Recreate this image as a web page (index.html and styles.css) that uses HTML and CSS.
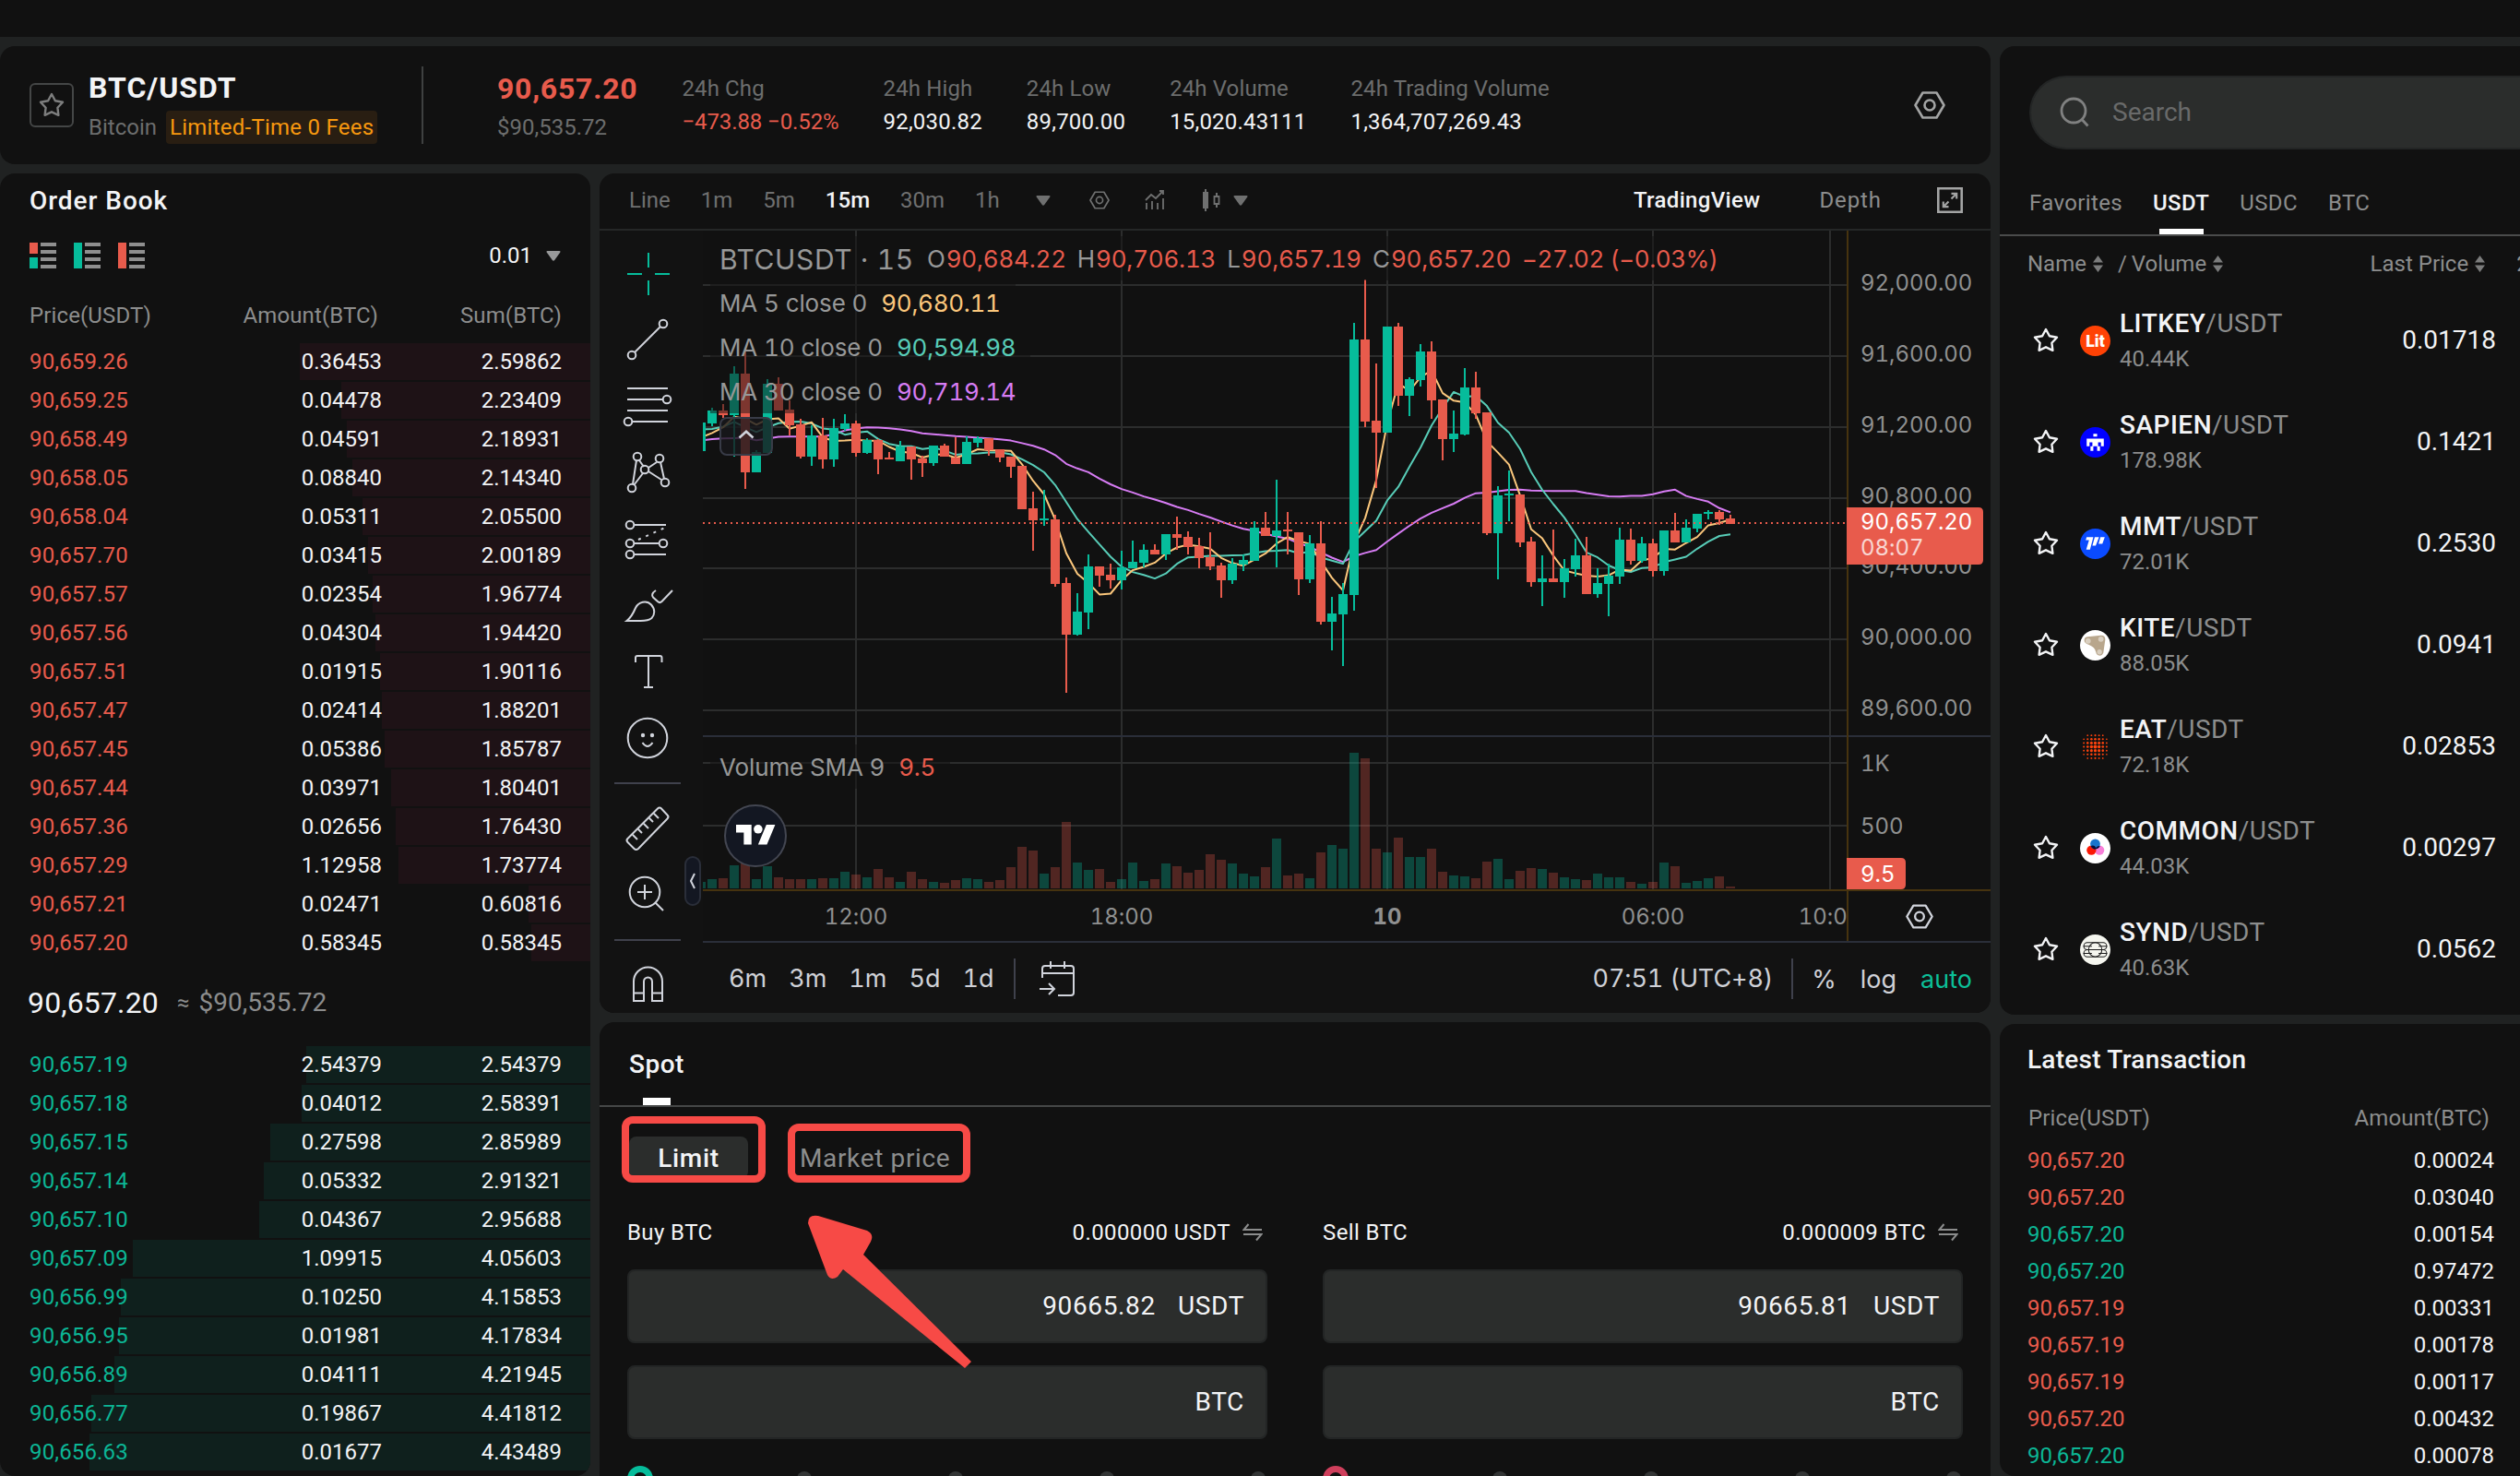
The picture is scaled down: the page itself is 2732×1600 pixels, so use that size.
FILE: index.html
```html
<!DOCTYPE html>
<html lang="en">
<head>
  <meta charset="UTF-8"/>
  <meta name="viewport" content="width=device-width, initial-scale=1.0"/>
  <title>BTC/USDT Spot Trading</title>
  <link rel="stylesheet" href="styles.css">
</head>
<body>
  <svg class="defs" aria-hidden="true">
    <symbol id="star" viewBox="0 0 28 28">
      <path d="M14 2l3.900 7.200 8.100 1.500-5.600 6 1 8.100-7.400-3.500-7.400 3.500 1-8.100-5.600-6 8.100-1.500z" fill="none" stroke="currentColor" stroke-width="2.400" stroke-linejoin="round"/>
    </symbol>
    <symbol id="hex" viewBox="0 0 34 30">
      <path d="M9.500 1.500h15L32.500 15l-8 13.500h-15L1.500 15z" fill="none" stroke="currentColor" stroke-width="2.600" stroke-linejoin="round"/>
      <circle cx="17" cy="15" r="5.500" fill="none" stroke="currentColor" stroke-width="2.600"/>
    </symbol>
    <symbol id="caret" viewBox="0 0 16 11"><path d="M1.500 0h13q1.500 0 .8 1.600L9.200 10q-1.200 1.300-2.400 0L.7 1.600Q0 0 1.500 0z" fill="currentColor"/></symbol>
    <symbol id="sort" viewBox="0 0 11 18"><path d="M5.500 0L11 7.500H0zM5.500 18L11 10.500H0z" fill="currentColor"/></symbol>
    <symbol id="swap" viewBox="0 0 22 20"><path d="M6.500 1L1.500 7H21M1 12h19.500L15 18.500" fill="none" stroke="currentColor" stroke-width="2"/></symbol>
  </svg>

  <header class="topbar"></header>

  <main class="layout">
    <div class="trade">
      <!-- Ticker -->
      <section class="panel ticker">
        <button class="fav-btn"><svg width="28" height="28"><use href="#star"/></svg></button>
        <div class="pair">
          <h1 class="pair-name">BTC/USDT</h1>
          <div class="pair-sub"><span>Bitcoin</span><span class="badge">Limited-Time 0 Fees</span></div>
        </div>
        <div class="stats">
          <div class="stat stat-price">
            <strong class="down">90,657.20</strong>
            <span>$90,535.72</span>
          </div>
          <div class="stat"><span>24h Chg</span><b class="down">−473.88 −0.52%</b></div>
          <div class="stat"><span>24h High</span><b>92,030.82</b></div>
          <div class="stat"><span>24h Low</span><b>89,700.00</b></div>
          <div class="stat"><span>24h Volume</span><b>15,020.43111</b></div>
          <div class="stat"><span>24h Trading Volume</span><b>1,364,707,269.43</b></div>
        </div>
        <svg class="ticker-settings" width="34" height="30"><use href="#hex"/></svg>
      </section>

      <div class="columns">
        <!-- Order book -->
        <section class="panel book">
          <h2 class="panel-title">Order Book</h2>
          <div class="book-tools">
            <svg width="29" height="28"><path fill="#e85b4c" d="M0 0h9v12H0z"/><path fill="#06bc9b" d="M0 16h9v12H0z"/><path fill="#8f8f8f" d="M12 0h17v4H12zM12 8h17v4H12zM12 16h17v4H12zM12 24h17v4H12z"/></svg>
            <svg width="29" height="28"><path fill="#06bc9b" d="M0 0h9v28H0z"/><path fill="#8f8f8f" d="M12 0h17v4H12zM12 8h17v4H12zM12 16h17v4H12zM12 24h17v4H12z"/></svg>
            <svg width="29" height="28"><path fill="#e85b4c" d="M0 0h9v28H0z"/><path fill="#8f8f8f" d="M12 0h17v4H12zM12 8h17v4H12zM12 16h17v4H12zM12 24h17v4H12z"/></svg>
            <div class="book-step">0.01 <svg width="16" height="11"><use href="#caret"/></svg></div>
          </div>
          <div class="book-head"><span>Price(USDT)</span><span>Amount(BTC)</span><span>Sum(BTC)</span></div>
          <div class="book-rows asks" id="asks"></div>
          <div class="book-last"><b>90,657.20</b><span>≈</span><em>$90,535.72</em></div>
          <div class="book-rows bids" id="bids"></div>
        </section>

        <div class="center">
          <!-- Chart -->
          <section class="panel chart">
            <div class="chart-bar">
              <div class="intervals">
                <span>Line</span><span>1m</span><span>5m</span><span class="active">15m</span><span>30m</span><span>1h</span>
              </div>
              <div class="chart-icons">
                <svg class="ic-caret" width="16" height="11"><use href="#caret"/></svg>
                <svg class="ic-hex" width="22" height="20"><use href="#hex"/></svg>
                <svg class="ic-ind" width="22" height="22" fill="none" stroke="currentColor" stroke-width="1.800"><path d="M1 11l6-6 5 4 8-8M16 1h4v4M2 14v7M8 12v9M14 14v7M20 9v12"/></svg>
                <svg class="ic-candle" width="20" height="24"><path fill="currentColor" d="M1 3h6v18H1zM3 0h2v24H3zM15 4h2v16h-2z"/><path d="M13.500 8h5v8h-5z" fill="#111" stroke="currentColor" stroke-width="1.800"/></svg>
                <svg width="16" height="11"><use href="#caret"/></svg>
              </div>
              <div class="views">
                <span class="active">TradingView</span>
                <span class="depth">Depth</span>
                <svg width="28" height="28" fill="none" stroke="currentColor" stroke-width="2.600"><path d="M1.300 1.300h25.400v25.400H1.300z"/><path d="M15.500 12.500L21 7M15.500 6.800H21.200V12.500M12.500 15.500L7 21M6.800 15.500V21.200H12.500" stroke-width="2.200"/></svg>
              </div>
            </div>
            <div class="chart-body">
              <div class="tools">
                <svg class="tool tool-on" viewBox="0 0 72 72"><path d="M14 37h16M44 37h16M37 14v16M37 44v16"/></svg>
                <svg class="tool" viewBox="0 0 72 72"><path d="M22 50L50 22"/><circle cx="53" cy="19" r="4.300"/><circle cx="19" cy="53" r="4.300"/></svg>
                <svg class="tool" viewBox="0 0 72 72"><path d="M14 17h44M14 29h39M14 41h44M19 53h39"/><circle cx="57" cy="29" r="4.300"/><circle cx="15" cy="53" r="4.300"/></svg>
                <svg class="tool" viewBox="0 0 72 72"><path d="M24 23l-4 26M21.500 49.500L31 37M27 23l5 7M37 31l9-6M37 35l14 9M50 25l4 18"/><circle cx="25" cy="19" r="4.300"/><circle cx="49" cy="21" r="4.300"/><circle cx="33" cy="33" r="4.300"/><circle cx="19" cy="53" r="4.300"/><circle cx="55" cy="47" r="4.300"/></svg>
                <svg class="tool" viewBox="0 0 72 72"><path d="M21 21h35M21 41h28M21 53h35"/><path d="M26 37l29-13" stroke-dasharray="3 6"/><circle cx="17" cy="21" r="4.300"/><circle cx="17" cy="41" r="4.300"/><circle cx="53" cy="41" r="4.300"/><circle cx="17" cy="53" r="4.300"/></svg>
                <svg class="tool" viewBox="0 0 72 72"><path d="M13.500 53c5-4 7-8 9.500-14 3-6.500 12-9 17-3.500 4.500 5 4 11 .5 14.500-3.500 3-7 3-12 3z"/><path d="M63 20L51.500 32c-1.500 1.500-3 1.500-4.500 0l-5-4.500c-1.500-2-1.500-4.500 3-7.500"/></svg>
                <svg class="tool" viewBox="0 0 72 72"><path d="M23 26v-5q0-2 2-2h24.500q2 0 2 2v5M37 19v34M32 53h10"/></svg>
                <svg class="tool" viewBox="0 0 72 72"><circle cx="36" cy="36" r="21.300"/><path d="M30.500 41q5.500 8 11 0"/><circle class="dot" cx="31" cy="33" r="2.200"/><circle class="dot" cx="41" cy="33" r="2.200"/></svg>
                <hr class="tool-sep">
                <svg class="tool" viewBox="0 0 72 72"><path d="M47 14.500q2-2 4 0l6.500 7q2 2 0 4L26 58q-2.500 2-4.500 0l-7-7q-2-2 0-4zM20 43l5 5M26 37l4 4M32 31l5 5M38 25l4 4M43 20l5 5"/></svg>
                <svg class="tool" viewBox="0 0 72 72"><circle cx="33" cy="33" r="16.300"/><path d="M25 33h16M33 25v16M44.500 44.500L53 53"/></svg>
                <hr class="tool-sep">
                <svg class="tool" viewBox="0 0 72 72"><path d="M21 53V32a15.500 15.500 0 0 1 31 0v21H41V32a4.500 4.500 0 0 0-9 0v21zM21 44.500h11M41 44.500h11"/></svg>
              </div>
              <button class="tools-toggle"><svg width="8" height="18" fill="none" stroke="#d1d4dc" stroke-width="2"><path d="M6 1L2 9l4 8"/></svg></button>

              <div class="chart-main">
                <svg class="plot" id="plot" width="1396" height="772" viewBox="0 0 1396 772"></svg>
                <div class="legend">
                  <div class="legend-row legend-main">
                    <span class="legend-sym">BTCUSDT · 15</span>
                    <span class="ohlc">O<i>90,684.22</i></span>
                    <span class="ohlc">H<i>90,706.13</i></span>
                    <span class="ohlc">L<i>90,657.19</i></span>
                    <span class="ohlc">C<i>90,657.20</i></span>
                    <span class="ohlc"><i class="diff">−27.02 (−0.03%)</i></span>
                  </div>
                  <div class="legend-row">MA 5 close 0 <i class="ma5">90,680.11</i></div>
                  <div class="legend-row">MA 10 close 0 <i class="ma10">90,594.98</i></div>
                  <div class="legend-row">MA 30 close 0 <i class="ma30">90,719.14</i></div>
                  <button class="legend-toggle"><svg width="18" height="10" fill="none" stroke="#d1d4dc" stroke-width="2.600"><path d="M1.500 8.500L9 1.800l7.500 6.700"/></svg></button>
                </div>
                <div class="legend legend-vol">
                  <div class="legend-row">Volume SMA 9 <i class="down">9.5</i></div>
                </div>
                <div class="tv-logo"><svg width="43" height="34" viewBox="0 0 36 28" fill="#fff"><path d="M14 22H7V11H0V4h14v18zM28 22h-8l7.500-18h8L28 22z"/><circle cx="20" cy="8" r="4"/></svg></div>

                <div class="range-bar">
                  <div class="ranges"><span>6m</span><span>3m</span><span>1m</span><span>5d</span><span>1d</span></div>
                  <svg class="goto" width="40" height="40" fill="none" stroke="#d1d4dc" stroke-width="2"><path d="M4 19V9q0-3 3-3h28q3 0 3 3v26q0 3-3 3H21M4 14h34M13 1v8M28 1v8M1 31h15M11 25l6 6-6 6"/></svg>
                  <div class="clock">07:51 (UTC+8)</div>
                  <div class="scales"><span>%</span><span>log</span><span class="on">auto</span></div>
                </div>
              </div>
            </div>
          </section>

          <!-- Order form -->
          <section class="panel spot">
            <div class="spot-head"><span>Spot</span></div>
            <div class="order-types">
              <span class="type active">Limit</span>
              <span class="type">Market price</span>
              <div class="mark mark-limit"></div>
              <div class="mark mark-market"></div>
              <svg class="mark-arrow" width="180" height="168" viewBox="0 0 180 168"><path fill="#f74a46" d="M13 2L66 18q8 4 4 12l-8 14 117 116-7 7L40 60l-6 8q-7 5-11-2L2 10Q2 0 13 2z"/></svg>
            </div>
            <div class="forms">
              <div class="form buy">
                <div class="form-head"><span>Buy BTC</span><span class="avail">0.000000 USDT <svg width="22" height="20"><use href="#swap"/></svg></span></div>
                <div class="field"><b>90665.82</b><span>USDT</span></div>
                <div class="field"><span>BTC</span></div>
                <div class="slider"><i class="knob"></i><i></i><i></i><i></i><i></i></div>
              </div>
              <div class="form sell">
                <div class="form-head"><span>Sell BTC</span><span class="avail">0.000009 BTC <svg width="22" height="20"><use href="#swap"/></svg></span></div>
                <div class="field"><b>90665.81</b><span>USDT</span></div>
                <div class="field"><span>BTC</span></div>
                <div class="slider"><i class="knob"></i><i></i><i></i><i></i><i></i></div>
              </div>
            </div>
          </section>
        </div>
      </div>
    </div>

    <aside class="side">
      <!-- Markets -->
      <section class="panel markets">
        <div class="search">
          <svg width="32" height="34" fill="none" stroke="#808181" stroke-width="2.800"><circle cx="15" cy="15" r="13"/><path d="M24 24.500l6.500 7"/></svg>
          <span>Search</span>
        </div>
        <div class="market-tabs">
          <span>Favorites</span><span class="active">USDT</span><span>USDC</span><span>BTC</span>
        </div>
        <div class="market-head">
          <span>Name</span><svg width="11" height="18"><use href="#sort"/></svg>
          <span class="slash">/</span><span>Volume</span><svg width="11" height="18"><use href="#sort"/></svg>
          <span class="last">Last Price</span><svg width="11" height="18"><use href="#sort"/></svg>
          <span class="chg">24h Chg</span>
        </div>
        <div id="markets"></div>
      </section>

      <!-- Trades -->
      <section class="panel trades">
        <h2 class="panel-title">Latest Transaction</h2>
        <div class="trade-row trade-head"><span>Price(USDT)</span><span>Amount(BTC)</span></div>
        <div id="trades"></div>
      </section>
    </aside>
  </main>

  <script src="script.js"></script>
</body>
</html>
```
FILE: styles.css
```css
/* Reset & Base */
*, *::before, *::after { margin:0; padding:0; box-sizing:border-box; }
body {
  font-family: Roboto, "Noto Sans", sans-serif;
  font-size: 24px;
  line-height: 1;
  background: #202222;
  color: #f3f4f6;
  width: 2732px;
  height: 1600px;
  overflow: hidden;
}
svg { display: block; flex: none; }
b, i, em { font-weight: inherit; font-style: normal; }
button { background: none; border: none; color: inherit; font: inherit; }
.defs { position: absolute; width: 0; height: 0; }
.down { color: #e85b4c; }
.panel { background: #111; border-radius: 16px; overflow: hidden; }
.panel-title { font-size: 28px; font-weight: 500; letter-spacing: 0.95px; }

/* Layout */
.topbar { height: 40px; background: #111; }
.layout { display: flex; gap: 10px; padding-top: 10px; height: 1560px; }
.trade { width: 2158px; flex: none; display: flex; flex-direction: column; gap: 10px; }
.columns { flex: 1; display: flex; gap: 10px; min-height: 0; }
.center { flex: 1; display: flex; flex-direction: column; gap: 10px; min-height: 0; }
.side { flex: 1; min-width: 0; display: flex; flex-direction: column; gap: 10px; }
.side .panel { border-radius: 16px 0 0 16px; }

/* Ticker */
.ticker {
  height: 128px;
  flex: none;
  display: flex;
  align-items: center;
  padding: 0 49px 0 32px;
}
.fav-btn {
  width: 48px;
  height: 48px;
  border: 2px solid #444646;
  border-radius: 6px;
  color: #7d7e7e;
  display: flex;
  align-items: center;
  justify-content: center;
}
.pair {
  width: 363px;
  height: 84px;
  margin-left: 16px;
  border-right: 2px solid #3f4141;
}
.pair-name { font-size: 32px; line-height: 47px; font-weight: 700; letter-spacing: 1px; }
.pair-sub { display: flex; align-items: center; gap: 10px; height: 36px; margin-top: 1px; color: #6c6d6d; }
.badge {
  height: 36px;
  padding: 0 4px;
  line-height: 36px;
  background: #291e12;
  border-radius: 4px;
  color: #f7980f;
  letter-spacing: 0.25px;
}
.stats { display: flex; gap: 48px; margin-left: 80px; height: 84px; }
.stat { color: #6c6d6d; line-height: 36px; padding-top: 6px; letter-spacing: 0.12px; }
.stat span, .stat b, .stat strong { display: block; white-space: nowrap; }
.stat b { color: #f3f4f6; letter-spacing: 0.2px; }
.stat b.down { color: #e85b4c; letter-spacing: -0.1px; }
.stat strong { font-size: 32px; font-weight: 700; line-height: 48px; letter-spacing: 0.75px; }
.stat-price { padding-top: 0; letter-spacing: 0; }
.ticker-settings { margin-left: auto; color: #a3a4a4; }

/* Order book */
.book { width: 640px; flex: none; }
.book .panel-title { padding: 14px 32px 0; line-height: 31px; }
.book-tools { display: flex; align-items: center; gap: 19px; height: 30px; margin-top: 29px; padding: 0 32px; }
.book-step { margin-left: auto; display: flex; align-items: center; gap: 15px; }
.book-step svg { color: #98999a; }
.book-head, .book-row {
  display: grid;
  grid-template-columns: 182px 200px 195px;
  padding-left: 32px;
}
.book-head span + span, .book-row span + span { text-align: right; }
.book-head { margin-top: 23px; height: 54px; line-height: 55px; color: #8c8d8d; letter-spacing: 0.12px; }
.book-head span:nth-child(2) { padding-right: 4px; }
.book-rows { display: grid; gap: 2px; }
.asks { margin-top: 3px; }
.book-row {
  height: 40px;
  line-height: 41px;
  background-repeat: no-repeat;
  background-position: right top;
}
.asks .book-row { background-image: linear-gradient(#1e1216, #1e1216); }
.bids .book-row { background-image: linear-gradient(#0f201d, #0f201d); }
.book-row span:first-child { letter-spacing: 0.15px; }
.asks span:first-child { color: #e85b4c; }
.bids span:first-child { color: #0cb695; }
.book-last { display: flex; align-items: center; height: 92px; padding: 0 0 2px 30px; font-size: 28px; color: #8c8d8d; }
.book-last b { font-size: 32px; color: #f3f4f6; letter-spacing: 0.15px; }
.book-last span { font-size: 24px; margin: 0 10px 0 20px; }

/* Chart */
.chart { height: 910px; flex: none; }
.chart-bar {
  height: 62px;
  display: flex;
  align-items: center;
  padding: 0 30px 2px 32px;
  border-bottom: 2px solid #252727;
  color: #6f7070;
}
.intervals { display: flex; gap: 33px; }
.chart-bar .active { color: #f3f4f6; font-weight: 500; }
.chart-icons { display: flex; align-items: center; margin-left: 39px; }
.ic-hex { margin-left: 42px; }
.ic-ind { margin-left: 38px; }
.ic-candle { margin: 0 14px 0 40px; }
.views { margin-left: auto; display: flex; align-items: center; color: #8c8d8d; }
.views .active { margin-right: 64px; letter-spacing: 0.35px; }
.depth { letter-spacing: 0.9px; }
.views svg { margin-left: 60px; color: #a3a4a4; }
.chart-body {
  position: relative;
  display: flex;
  height: 848px;
  font-family: Inter, "Noto Sans", sans-serif;
  font-variant-numeric: tabular-nums;
}
.tools { width: 112px; flex: none; padding: 10px 0 0 16px; background: #121212; overflow: hidden; }
.tool {
  width: 72px;
  height: 72px;
  fill: none;
  stroke: #d1d4dc;
  stroke-width: 2;
}
.tool-on { stroke: #06bc9b; }
.tool .dot { fill: #d1d4dc; stroke: none; }
.tool-sep { width: 72px; height: 2px; margin: 12px 0; border: none; background: #3f414c; }
.tools-toggle {
  position: absolute;
  left: 92px;
  top: 678px;
  width: 18px;
  height: 54px;
  border: 2px solid #2a2e39;
  border-radius: 9px;
  background: #131722;
  display: flex;
  align-items: center;
  justify-content: center;
}
.chart-main { flex: 1; position: relative; }
.plot text { font-size: 24px; fill: #8f9090; letter-spacing: -0.05px; }
.plot .tag-text { fill: #fff; }
.plot .tag-sub { fill: #fff; opacity: 0.75; }
.legend {
  position: absolute;
  left: 8px;
  top: 6px;
  display: flex;
  flex-direction: column;
  align-items: flex-start;
  font-size: 26px;
  letter-spacing: -0.12px;
  color: #979898;
}
.legend-row {
  display: flex;
  align-items: center;
  gap: 15px;
  height: 48px;
  padding: 2px 16px 0 10px;
  background: rgba(17,17,17,0.5);
  white-space: nowrap;
}
.legend-row i { letter-spacing: -0.3px; }
.legend-main { gap: 12px; }
.legend-sym { font-size: 30px; margin-right: 2px; letter-spacing: 0.6px; }
.ohlc { display: flex; gap: 1px; }
.ohlc i { color: #e85b4c; letter-spacing: -0.2px; }
.ohlc .diff { letter-spacing: -0.4px; }
.ma5 { color: #fbc77c; }
.ma10 { color: #58cdb8; }
.ma30 { color: #d77cf4; }
.legend-toggle {
  width: 58px;
  height: 42px;
  margin: 4px 0 0 10px;
  padding-bottom: 4px;
  border: 2px solid #383b47;
  border-radius: 8px;
  background: rgba(24,24,27,0.8);
  display: flex;
  align-items: center;
  justify-content: center;
}
.legend-vol { top: 557px; }
.tv-logo {
  position: absolute;
  left: 23px;
  top: 622px;
  width: 68px;
  height: 68px;
  border: 2px solid #434651;
  border-radius: 50%;
  background: #131722;
  display: flex;
  align-items: center;
  justify-content: center;
}
.range-bar {
  height: 76px;
  display: flex;
  align-items: center;
  padding: 2px 20px 0 28px;
  font-size: 27px;
  color: #cfd1d7;
  background: #121212;
}
.ranges { display: flex; gap: 24px; padding-right: 21px; line-height: 44px; border-right: 2px solid #3f414c; }
.goto { margin-left: 25px; }
.clock { margin-left: auto; padding-right: 20px; line-height: 44px; border-right: 2px solid #3f414c; letter-spacing: -0.1px; }
.scales { display: flex; gap: 26px; padding-left: 20px; }
.on { color: #0cbf98; }

/* Order form */
.spot { flex: 1; padding: 0 30px; display: flex; flex-direction: column; overflow: visible; }
.spot-head { height: 92px; margin: 0 -30px; padding: 0 32px; line-height: 92px; font-size: 28px; font-weight: 500; border-bottom: 2px solid #454747; flex: none; }
.spot-head span { display: block; position: relative; width: 60px; height: 90px; letter-spacing: 0.5px; }
.spot-head span::after {
  content: "";
  position: absolute;
  left: 15px;
  bottom: 0;
  width: 30px;
  height: 8px;
  background: #fff;
}
.order-types { position: relative; display: flex; height: 46px; margin-top: 32px; font-size: 28px; flex: none; }
.type { line-height: 47px; color: #8c8d8d; padding: 0 56px; letter-spacing: 0.65px; }
.type.active { padding: 0; margin-left: 2px; width: 129px; text-align: center; color: #f3f4f6; font-weight: 500; background: #2b2d2c; border-radius: 8px; }
.mark { position: absolute; border: 8px solid #f74a46; border-radius: 12px; }
.mark-limit { left: -6px; top: -22px; width: 156px; height: 72px; }
.mark-market { left: 174px; top: -14px; width: 198px; height: 64px; }
.mark-arrow { position: absolute; left: 194px; top: 84px; }
.forms { display: grid; grid-template-columns: 1fr 1fr; gap: 60px; margin-top: 40px; }
.form-head { display: flex; justify-content: space-between; align-items: center; height: 34px; padding: 1px 5px 0 0; margin-bottom: 24px; letter-spacing: 0.4px; }
.avail { display: flex; align-items: center; gap: 13px; }
.avail svg { color: #8c8d8d; }
.field {
  height: 80px;
  margin-bottom: 24px;
  padding: 0 23px;
  display: flex;
  align-items: center;
  justify-content: flex-end;
  gap: 24px;
  font-size: 28px;
  letter-spacing: 0.65px;
  background: #2b2d2c;
  border: 2px solid #232525;
  border-radius: 8px;
}
.slider { display: flex; justify-content: space-between; align-items: center; height: 26px; margin-top: 30px; padding-right: 2px; }
.slider i { width: 16px; height: 16px; border-radius: 50%; background: #333535; }
.slider .knob { width: 28px; height: 28px; margin-right: 8px; background: #111; border: 7px solid #06bc9b; }
.sell .knob { border-color: #cf3f5c; }

/* Markets */
.markets { height: 1050px; flex: none; padding-top: 32px; }
.search {
  height: 80px;
  margin-left: 32px;
  padding-left: 31px;
  display: flex;
  align-items: center;
  gap: 25px;
  font-size: 28px;
  color: #696a6a;
  background: #2b2d2c;
  border: 2px solid #232525;
  border-right: none;
  border-radius: 40px 0 0 40px;
}
.market-tabs {
  display: flex;
  gap: 33px;
  height: 94px;
  padding: 38px 0 0 32px;
  line-height: 40px;
  letter-spacing: 0.35px;
  color: #8c8d8d;
  border-bottom: 2px solid #4a4b4b;
}
.market-tabs .active { color: #f3f4f6; font-weight: 500; position: relative; }
.market-tabs .active::after {
  content: "";
  position: absolute;
  left: 7px;
  bottom: 0;
  width: 48px;
  height: 6px;
  background: #fff;
}
.market-head { display: flex; align-items: center; height: 58px; padding: 2px 0 0 30px; color: #8c8d8d; white-space: nowrap; }
.market-head svg { margin-left: 7px; color: #7b7c7c; }
.slash { margin: 0 5px 0 16px; }
.last { flex: none; width: 266px; text-align: right; }
.chg { flex: none; margin-left: 34px; }
.market-row { display: flex; align-items: center; height: 110px; padding-left: 36px; }
.market-row > svg + svg { margin-left: 23px; }
.market-name { width: 200px; margin-left: 10px; padding-top: 1px; }
.market-name p { font-size: 28px; line-height: 39px; color: #8c8d8d; letter-spacing: 0.5px; white-space: nowrap; }
.market-name b { color: #f3f4f6; font-weight: 500; }
.market-name span { line-height: 39px; color: #8c8d8d; }
.market-price { width: 208px; text-align: right; font-size: 28px; }

/* Trades */
.trades { flex: 1; padding: 0 0 0 30px; }
.trades .panel-title { line-height: 40px; padding-top: 19px; letter-spacing: 0.25px; }
.trade-row { display: flex; justify-content: space-between; width: 506px; height: 40px; line-height: 40px; }
.trade-head { color: #8c8d8d; margin: 23px 0 6px; padding: 0 5px 0 1px; letter-spacing: 0.12px; }
.trade-row .up { color: #0cb695; }
```
FILE: script.js
```js
// ---------- Order book ----------
const asks = [
  ['90,659.26', '0.36453', '2.59862'], ['90,659.25', '0.04478', '2.23409'],
  ['90,658.49', '0.04591', '2.18931'], ['90,658.05', '0.08840', '2.14340'],
  ['90,658.04', '0.05311', '2.05500'], ['90,657.70', '0.03415', '2.00189'],
  ['90,657.57', '0.02354', '1.96774'], ['90,657.56', '0.04304', '1.94420'],
  ['90,657.51', '0.01915', '1.90116'], ['90,657.47', '0.02414', '1.88201'],
  ['90,657.45', '0.05386', '1.85787'], ['90,657.44', '0.03971', '1.80401'],
  ['90,657.36', '0.02656', '1.76430'], ['90,657.29', '1.12958', '1.73774'],
  ['90,657.21', '0.02471', '0.60816'], ['90,657.20', '0.58345', '0.58345']
];
const bids = [
  ['90,657.19', '2.54379', '2.54379'], ['90,657.18', '0.04012', '2.58391'],
  ['90,657.15', '0.27598', '2.85989'], ['90,657.14', '0.05332', '2.91321'],
  ['90,657.10', '0.04367', '2.95688'], ['90,657.09', '1.09915', '4.05603'],
  ['90,656.99', '0.10250', '4.15853'], ['90,656.95', '0.01981', '4.17834'],
  ['90,656.89', '0.04111', '4.21945'], ['90,656.77', '0.19867', '4.41812'],
  ['90,656.63', '0.01677', '4.43489']
];

function renderBook(id, rows) {
  document.getElementById(id).innerHTML = rows.map(([price, amount, sum]) => {
    const depth = Math.round(sum * 124.4 - 8.4);
    return `<div class="book-row" style="background-size:${depth}px 100%"><span>${price}</span><span>${amount}</span><span>${sum}</span></div>`;
  }).join('');
}
renderBook('asks', asks);
renderBook('bids', bids);

// ---------- Markets ----------
function eatDots() {
  let out = '';
  for (let y = -3; y <= 3; y++) {
    for (let x = -3; x <= 3; x++) {
      const d = Math.hypot(x, y);
      if (d > 3.7) continue;
      out += `<circle cx="${16 + x * 4}" cy="${16 + y * 4}" r="${(1.9 - d * 0.3).toFixed(2)}"/>`;
    }
  }
  return `<g fill="#ff430d">${out}</g>`;
}

const coinLogos = {
  LITKEY: '<circle cx="16" cy="16" r="16" fill="#ff4205"/><text x="16" y="22" text-anchor="middle" font-size="17" font-weight="900" fill="#fff">Lit</text>',
  SAPIEN: '<circle cx="16" cy="16" r="16" fill="#0000ff"/><path fill="#fff" d="M14 7h4v3h-4zM7 12h18v8h-3v-4h-3v4h2v5h-3v-5h-4v5h-3v-5h2v-4h-3v4H7z"/>',
  MMT: '<circle cx="16" cy="16" r="16" fill="#0a4bff"/><path fill="#fff" d="M7 9h7l-3.500 13H6.500L9.500 12H6zM15.500 9H20l-3.500 9H13zM21.500 9H26l-2.500 7h-4z"/>',
  KITE: '<circle cx="16" cy="16" r="16" fill="#fff"/><path fill="#b8a68c" d="M8 7l14-1.500q5 0 4.500 5L24.500 24q-1.500 4-5.500 2.500-2-1-2.500-4-1-4.500-7-7Q4 14 4.500 10 5 7 8 7z"/><circle cx="8.500" cy="11.500" r="2.800" fill="#d9cfc0"/><circle cx="22" cy="9.500" r="2.800" fill="#d9cfc0"/><circle cx="20.500" cy="23" r="2.600" fill="#d9cfc0"/>',
  EAT: eatDots(),
  COMMON: '<circle cx="16" cy="16" r="16" fill="#fff"/><circle cx="20.500" cy="18" r="5" fill="#f77fd8"/><circle cx="12" cy="18" r="5" fill="#fb1804"/><circle cx="16" cy="11.500" r="5.200" fill="#1a74cc"/><path fill="#0a0d3a" d="M11.500 13.500q4-1.500 5.500 3-1.500 1.200-3 0-2-.5-2.500-3zM16 16.600q2-3.600 5-3-1.500 3.500-5 3z"/>',
  SYND: '<circle cx="16" cy="16" r="16" fill="#f5f6ef"/><g fill="none" stroke="#1c1c1c" stroke-width="1"><rect x="4" y="8.500" width="24" height="7.500" rx="3.700"/><rect x="4" y="16" width="24" height="7.500" rx="3.700"/><ellipse cx="16" cy="16" rx="7" ry="7.500"/><path d="M3.500 12.300h9M19.500 12.300h9M3.500 19.800h9M19.500 19.800h9"/></g>'
};
const markets = [
  ['LITKEY', '40.44K', '0.01718'], ['SAPIEN', '178.98K', '0.1421'], ['MMT', '72.01K', '0.2530'],
  ['KITE', '88.05K', '0.0941'], ['EAT', '72.18K', '0.02853'], ['COMMON', '44.03K', '0.00297'],
  ['SYND', '40.63K', '0.0562']
];
document.getElementById('markets').innerHTML = markets.map(([coin, vol, price]) => `
  <div class="market-row">
    <svg width="28" height="28"><use href="#star"/></svg>
    <svg width="33" height="33" viewBox="0 0 32 32">${coinLogos[coin]}</svg>
    <div class="market-name"><p><b>${coin}</b>/USDT</p><span>${vol}</span></div>
    <div class="market-price">${price}</div>
  </div>`).join('');

// ---------- Latest trades ----------
const trades = [
  ['down', '90,657.20', '0.00024'], ['down', '90,657.20', '0.03040'], ['up', '90,657.20', '0.00154'],
  ['up', '90,657.20', '0.97472'], ['down', '90,657.19', '0.00331'], ['down', '90,657.19', '0.00178'],
  ['down', '90,657.19', '0.00117'], ['down', '90,657.20', '0.00432'], ['up', '90,657.20', '0.00078']
];
document.getElementById('trades').innerHTML = trades.map(([side, price, amount]) =>
  `<div class="trade-row"><span class="${side}">${price}</span><span>${amount}</span></div>`).join('');

// ---------- Chart ----------
// side, high, body top, body bottom, low (plot units, top down), volume
const candles = [
  ['u',528,537,578,587,10],['d',517,537,551,560,11],['u',398,421,551,682,25],['d',350,421,732,784,27],
  ['u',661,668,732,732,10],['u',438,453,670,670,24],['d',433,453,537,537,12],['d',505,534,584,616,10],
  ['d',563,581,682,688,10],['u',584,616,682,711,10],['d',560,616,691,720,11],['u',563,592,691,714,11],
  ['u',549,578,595,601,18],['d',569,578,670,682,15],['u',624,630,670,674,12],['d',628,630,691,738,21],
  ['d',668,685,691,691,12],['u',633,650,697,697,7],['d',650,650,691,755,18],['d',680,688,703,746,10],
  ['u',648,648,703,711,7],['d',642,648,682,682,6],['d',622,684,706,706,9],['u',618,636,706,706,11],
  ['u',618,624,639,653,10],['d',624,624,662,679,7],['d',659,659,685,700,9],['d',682,682,714,749,23],
  ['d',711,711,848,848,45],['d',793,845,883,979,41],['u',787,877,883,900,16],['d',865,880,1083,1092,23],
  ['d',1063,1080,1243,1426,72],['u',1112,1170,1243,1246,28],['u',990,1028,1173,1225,20],['d',1028,1028,1057,1092,21],
  ['d',1019,1054,1071,1098,7],['u',979,1031,1071,1101,10],['u',947,1013,1034,1034,28],['u',958,976,1016,1032,8],
  ['d',958,976,990,990,10],['u',926,926,990,1008,27],['d',871,926,938,976,24],['d',918,935,967,990,17],
  ['d',938,963,1002,1034,20],['d',920,999,1028,1040,37],['d',1016,1025,1071,1127,31],['u',1002,1019,1071,1083,27],
  ['u',990,1008,1022,1042,16],['u',886,906,1010,1010,13],['d',857,906,932,932,23],['u',755,915,932,1031,54],
  ['d',857,912,918,990,14],['d',920,920,1069,1118,16],['u',929,955,1069,1080,11],['d',886,955,1202,1211,39],
  ['u',1124,1176,1202,1292,47],['u',1080,1115,1179,1342,43],['u',261,314,1118,1167,147],['d',125,314,572,589,141],
  ['d',389,569,607,781,43],['u',273,273,607,607,39],['d',261,273,491,523,55],['u',433,438,491,555,34],
  ['u',328,351,441,462,34],['d',319,351,505,563,43],['d',502,502,627,694,18],['u',537,610,627,668,14],
  ['u',404,465,613,616,13],['d',415,465,546,563,11],['d',543,543,923,929,29],['u',775,804,923,1069,32],
  ['u',726,799,804,886,10],['d',801,801,952,967,19],['d',935,950,1077,1092,22],['u',993,1066,1077,1153,21],
  ['d',912,1066,1077,1077,17],['u',1005,1034,1077,1127,12],['u',941,993,1037,1060,10],['d',935,993,1115,1115,9],
  ['u',1034,1080,1115,1127,16],['u',1020,1057,1083,1185,12],['u',906,944,1060,1083,12],['d',909,944,1010,1022,7],
  ['u',935,955,1010,1016,5],['d',941,955,1042,1060,7],['u',915,915,1042,1057,28],['d',859,915,952,952,24],
  ['u',880,906,952,952,6],['u',862,862,909,920,8],['u',851,857,863,880,11],['d',851,857,880,897,13],
  ['d',865,877,894,894,2]
];
// average values that reach back before the first visible candle
const maHistory = {
  5: [622,608,590,557,563],
  10: [597,595,588,573,590,605,590,577,573,572],
  30: [632,627,625,624,623,631,626,620,619,619,619,619,612,600,594,590,591,593,597,602,609,612,615,618,620,623,625,628,632,640]
};
const UP = '#06bc9b', DOWN = '#e85b4c';
const px = i => 10 + i * 12;
const py = v => Math.round(10 + v / 2.904);

function maLine(n, color) {
  const closes = candles.map(c => c[0] === 'u' ? c[2] : c[3]);
  const pts = maHistory[n].map((v, k) => [k - 1, v]);
  for (let i = n - 1; i < closes.length; i++) {
    pts.push([i, closes.slice(i - n + 1, i + 1).reduce((a, b) => a + b) / n]);
  }
  return `<polyline fill="none" stroke="${color}" stroke-width="2" stroke-linejoin="round" points="${pts.map(([i, v]) => px(i) + ',' + (10 + v / 2.904).toFixed(1)).join(' ')}"/>`;
}

function drawPlot() {
  const gridY = [59, 136, 213, 290, 366, 443, 520, 577, 645];
  const labels = ['92,000.00', '91,600.00', '91,200.00', '90,800.00', '90,400.00', '90,000.00', '89,600.00', '1K', '500'];
  const gridX = [[166, '12:00'], [454, '18:00'], [742, '10'], [1030, '06:00'], [1222, '10:00']];
  let s = '<clipPath id="pane"><rect width="1240" height="770"/></clipPath><g shape-rendering="crispEdges" clip-path="url(#pane)">';

  gridX.forEach(([x]) => s += `<rect x="${x - 1}" y="0" width="2" height="714" fill="#2c2d2d"/>`);
  gridY.forEach(y => s += `<rect x="0" y="${y - 1}" width="1240" height="2" fill="#2c2d2d"/>`);
  s += '</g>';

  // volume
  s += '<rect x="0" y="706" width="3" height="7" fill="#06bc9b" opacity="0.32"/>';
  candles.forEach((c, i) => {
    s += `<rect x="${px(i) - 5}" y="${713 - c[5]}" width="10" height="${c[5]}" fill="${c[0] === 'u' ? UP : DOWN}" opacity="${c[0] === 'u' ? 0.32 : 0.3}"/>`;
  });

  s += maLine(30, '#d77cf4') + maLine(10, '#58cdb8') + maLine(5, '#fbc77c');

  // candles
  s += `<rect x="0" y="208" width="3" height="31" fill="${UP}"/>`;
  candles.forEach(([side, high, top, bottom, low], i) => {
    const x = px(i), color = side === 'u' ? UP : DOWN;
    s += `<rect x="${x - 1}" y="${py(high)}" width="2" height="${py(low) - py(high)}" fill="${color}"/>`;
    s += `<rect x="${x - 5}" y="${py(top)}" width="10" height="${Math.max(2, py(bottom) - py(top))}" fill="${color}"/>`;
  });

  // last price
  s += `<line x1="0" x2="1240" y1="317" y2="317" stroke="${DOWN}" stroke-width="2" stroke-dasharray="2 4"/>`;

  // axes
  s += '<rect x="0" y="547" width="1396" height="2" fill="#2a2e39"/>';
  s += '<rect x="1240" y="0" width="2" height="770" fill="#46330f"/><rect x="0" y="714" width="1396" height="2" fill="#46330f"/>';
  s += '<rect x="0" y="770" width="1396" height="2" fill="#2a2e39"/>';
  gridY.forEach((y, k) => s += `<text x="1255" y="${y + (k > 6 ? 9 : 6)}">${labels[k]}</text>`);
  s += '<g clip-path="url(#pane)">';
  gridX.forEach(([x, t]) => s += `<text x="${x}" y="752" text-anchor="middle"${t === '10' ? ' font-weight="700"' : ''}>${t}</text>`);
  s += '</g>';

  // tags
  s += `<path d="M1240 300h143q5 0 5 5v52q0 5-5 5h-143z" fill="${DOWN}"/><text class="tag-text" x="1255" y="324">90,657.20</text><text class="tag-sub" x="1255" y="352">08:07</text>`;
  s += `<path d="M1240 680h59q5 0 5 5v24q0 5-5 5h-59z" fill="${DOWN}"/><text class="tag-text" x="1255" y="706">9.5</text>`;
  s += '<svg x="1304" y="730" width="30" height="27" color="#d1d4dc"><use href="#hex"/></svg>';
  document.getElementById('plot').innerHTML = s;
}
drawPlot();
```
